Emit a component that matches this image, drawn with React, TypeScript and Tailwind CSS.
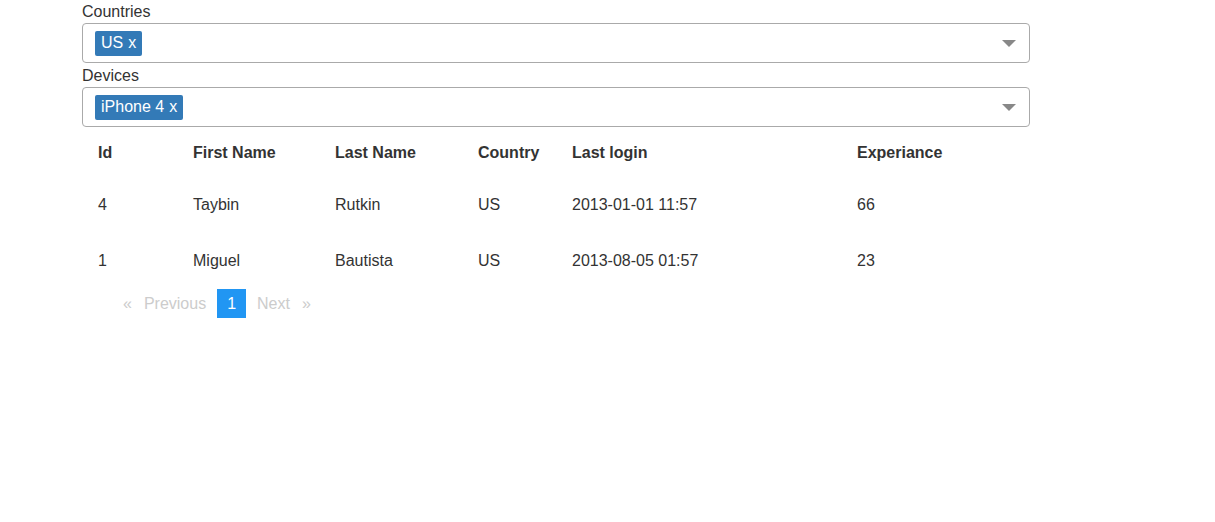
import React from "react";

function Arrow() {
  return (
    <svg width="14" height="7" viewBox="0 0 14 7" aria-hidden="true">
      <path d="M0 0h14L7 7z" fill="#888" />
    </svg>
  );
}

function MultiSelect({ label, values, first }: { label: string; values: string[]; first?: boolean }) {
  return (
    <div>
      <div className={`${first ? "h-[23px] leading-[23px]" : "h-6 leading-[25px]"} text-[#333]`}>{label}</div>
      <div className="flex h-10 items-center justify-between rounded-[4px] border border-[#aaa] bg-white pl-3 pr-[13px]">
        <div className="flex gap-1">
          {values.map((v) => (
            <span
              key={v}
              className="flex h-[25px] items-center gap-[5px] rounded-[2px] bg-[#337ab7] px-[6px] leading-none text-white"
            >
              {v}
              <span>x</span>
            </span>
          ))}
        </div>
        <Arrow />
      </div>
    </div>
  );
}

const rows = [
  { id: 4, first: "Taybin", last: "Rutkin", country: "US", login: "2013-01-01 11:57", exp: 66 },
  { id: 1, first: "Miguel", last: "Bautista", country: "US", login: "2013-08-05 01:57", exp: 23 },
];

export default function App() {
  return (
    <div className="min-h-[522px] bg-white font-['Liberation_Sans',Arial,sans-serif] text-base text-[#333]">
      <div className="ml-[82px] w-[948px]">
        <MultiSelect label="Countries" values={["US"]} first />
        <MultiSelect label="Devices" values={["iPhone 4"]} />

        <table className="w-full table-fixed border-collapse text-left text-[#333]">
          <colgroup>
            <col className="w-[95px]" />
            <col className="w-[142px]" />
            <col className="w-[143px]" />
            <col className="w-[94px]" />
            <col className="w-[285px]" />
            <col />
          </colgroup>
          <thead>
            <tr className="h-12">
              <th className="px-4 pt-1 font-bold">Id</th>
              <th className="px-4 pt-1 font-bold">First Name</th>
              <th className="px-4 pt-1 font-bold">Last Name</th>
              <th className="px-4 pt-1 font-bold">Country</th>
              <th className="px-4 pt-1 font-bold">Last login</th>
              <th className="px-4 pt-1 font-bold">Experiance</th>
            </tr>
          </thead>
          <tbody>
            {rows.map((r) => (
              <tr key={r.id} className="h-14">
                <td className="px-4 pt-1">{r.id}</td>
                <td className="px-4 pt-1">{r.first}</td>
                <td className="px-4 pt-1">{r.last}</td>
                <td className="px-4 pt-1">{r.country}</td>
                <td className="px-4 pt-1">{r.login}</td>
                <td className="px-4 pt-1">{r.exp}</td>
              </tr>
            ))}
          </tbody>
        </table>

        <ul className="mt-[2px] flex h-[29px] items-center pl-[35px] text-[#ccc]">
          <li className="px-[6px]">«</li>
          <li className="px-[6px]">Previous</li>
          <li className="mx-[5px] flex h-[29px] items-center bg-[#2196f3] px-[10px] text-white">1</li>
          <li className="px-[6px]">Next</li>
          <li className="px-[6px]">»</li>
        </ul>
      </div>
    </div>
  );
}
